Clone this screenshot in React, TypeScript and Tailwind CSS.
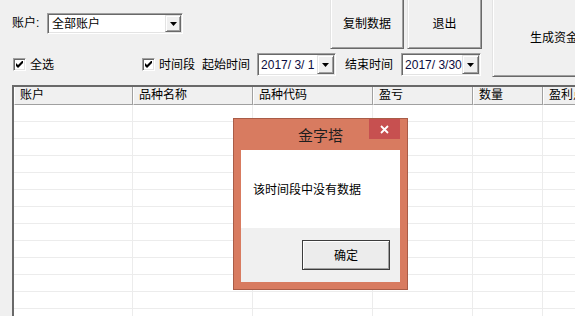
import React from "react";

const font = "font-['Liberation_Sans','Noto_Sans_CJK_SC',sans-serif]";

const sunken =
  "border border-t-[#a0a0a0] border-l-[#a0a0a0] border-r-white border-b-white shadow-[inset_1px_1px_0_#696969,inset_-1px_-1px_0_#e3e3e3]";
const raised =
  "border border-t-[#e3e3e3] border-l-[#e3e3e3] border-r-[#696969] border-b-[#696969] shadow-[inset_1px_1px_0_#ffffff,inset_-1px_-1px_0_#a0a0a0]";

const columns = [
  { name: "账户", w: "w-[119px]" },
  { name: "品种名称", w: "w-[120px]" },
  { name: "品种代码", w: "w-[120px]" },
  { name: "盈亏", w: "w-[100px]" },
  { name: "数量", w: "w-[70px]" },
  { name: "盈利点数", w: "w-[160px]" },
];

function DropArrow() {
  return (
    <svg width="7" height="4" viewBox="0 0 7 4">
      <path d="M0 0h7L3.5 4z" fill="#000" />
    </svg>
  );
}

function DropButton({ w }: { w: string }) {
  return (
    <div className={`${raised} ${w} h-full shrink-0 bg-[#f0f0f0] flex items-center justify-center`}>
      <DropArrow />
    </div>
  );
}

function CheckBox({ label }: { label: string }) {
  return (
    <div className="flex items-center shrink-0">
      <div className={`${sunken} w-[13px] h-[13px] shrink-0 bg-white flex items-center justify-center`}>
        <svg width="7" height="7" viewBox="0 0 7 7">
          <path d="M0 2v3l2 2 5-5V-1L2 4z" fill="#000" />
        </svg>
      </div>
      <span className="ml-[4px] text-[12px] leading-[14px] whitespace-nowrap">{label}</span>
    </div>
  );
}

function DatePicker({ value, w }: { value: string; w: string }) {
  return (
    <div className={`${sunken} ${w} h-[23px] shrink-0 bg-white flex items-center p-[1px]`}>
      <span className="flex-1 pl-[2px] text-[12px] leading-[14px] whitespace-pre text-[#0c0c40]">
        {value}
      </span>
      <DropButton w="w-[17px]" />
    </div>
  );
}

export default function App() {
  return (
    <div className={`relative w-[575px] h-[316px] overflow-hidden bg-[#f0f0f0] text-black ${font}`}>
      {/* Top controls */}
      <div className="flex -mt-[2px]">
        <div className="w-[492px] shrink-0 flex flex-col">
          <div className="flex h-[51px]">
            <div className="flex items-start pl-[12px] pt-[15px] w-[330px] shrink-0">
              <span className="text-[12px] leading-[21px] w-[35px] shrink-0 whitespace-nowrap">账户:</span>
              <div className={`${sunken} w-[136px] h-[21px] shrink-0 bg-white flex items-center p-[1px]`}>
                <span className="flex-1 pl-[3px] text-[12px] leading-[14px] whitespace-nowrap">全部账户</span>
                <DropButton w="w-[16px]" />
              </div>
            </div>
            <button className={`${raised} w-[74px] h-[51px] shrink-0 bg-[#f0f0f0] text-[12px] whitespace-nowrap`}>
              复制数据
            </button>
            <button className={`${raised} ml-[3px] w-[75px] h-[51px] shrink-0 bg-[#f0f0f0] text-[12px] whitespace-nowrap`}>
              退出
            </button>
          </div>
          <div className="flex items-center h-[23px] mt-[4px] pl-[13px]">
            <div className="w-[129px] shrink-0">
              <CheckBox label="全选" />
            </div>
            <CheckBox label="时间段" />
            <span className="ml-[7px] shrink-0 text-[12px] leading-[14px] whitespace-nowrap">起始时间</span>
            <div className="ml-[7px] shrink-0">
              <DatePicker value="2017/ 3/ 1" w="w-[79px]" />
            </div>
            <span className="ml-[9px] shrink-0 text-[12px] leading-[14px] whitespace-nowrap">结束时间</span>
            <div className="ml-[8px] shrink-0">
              <DatePicker value="2017/ 3/30" w="w-[80px]" />
            </div>
          </div>
        </div>
        <button className={`${raised} w-[148px] h-[79px] shrink-0 bg-[#f0f0f0] text-[12px] whitespace-nowrap`}>
          生成资金曲线
        </button>
      </div>

      {/* Data grid */}
      <div className="ml-[12px] mt-[8px] w-[700px] border-l-2 border-t-2 border-l-[#696969] border-t-[#696969] bg-white">
        <div className="flex h-[18px]">
          {columns.map((c) => (
            <div
              key={c.name}
              className={`${c.w} shrink-0 bg-[#f0f0f0] border-l border-l-white border-r border-r-[#a0a0a0] border-b border-b-[#a0a0a0] pl-[5px] text-[12px] leading-[17px] whitespace-nowrap`}
            >
              {c.name}
            </div>
          ))}
        </div>
        {Array.from({ length: 13 }).map((_, r) => (
          <div key={r} className="flex h-[17px]">
            {columns.map((c) => (
              <div key={c.name} className={`${c.w} shrink-0 border-r border-b border-[#ececec]`} />
            ))}
          </div>
        ))}
      </div>

      {/* Message dialog */}
      <div className="absolute left-[233px] top-[118px] w-[175px] h-[172px] bg-[#d87b60] border border-[#a95c47] flex flex-col px-[7px] pb-[7px] font-['Noto_Sans_CJK_SC',sans-serif]">
        <div className="relative h-[31px] flex items-center justify-center">
          <span className="text-[15px] leading-[18px] text-[#1e1e1e]">金字塔</span>
          <div className="absolute right-0 top-0 w-[31px] h-[20px] bg-[#c75050] flex items-center justify-center">
            <svg width="9" height="9" viewBox="0 0 9 9">
              <path d="M1 1l7 7M8 1L1 8" stroke="#fff" strokeWidth="1.8" />
            </svg>
          </div>
        </div>
        <div className="flex-1 flex flex-col">
          <div className="h-[78px] bg-white flex items-center pl-[12px]">
            <span className="text-[12px] leading-[14px] whitespace-nowrap">该时间段中没有数据</span>
          </div>
          <div className="flex-1 bg-[#f0f0f0] flex justify-end pr-[10px] pt-[12px]">
            <button className="w-[88px] h-[30px] border border-[#3c3c3c] bg-[#ececec] shadow-[inset_1px_1px_0_#ffffff,inset_-1px_-1px_0_#a0a0a0] text-[12px]">
              确定
            </button>
          </div>
        </div>
      </div>
    </div>
  );
}
